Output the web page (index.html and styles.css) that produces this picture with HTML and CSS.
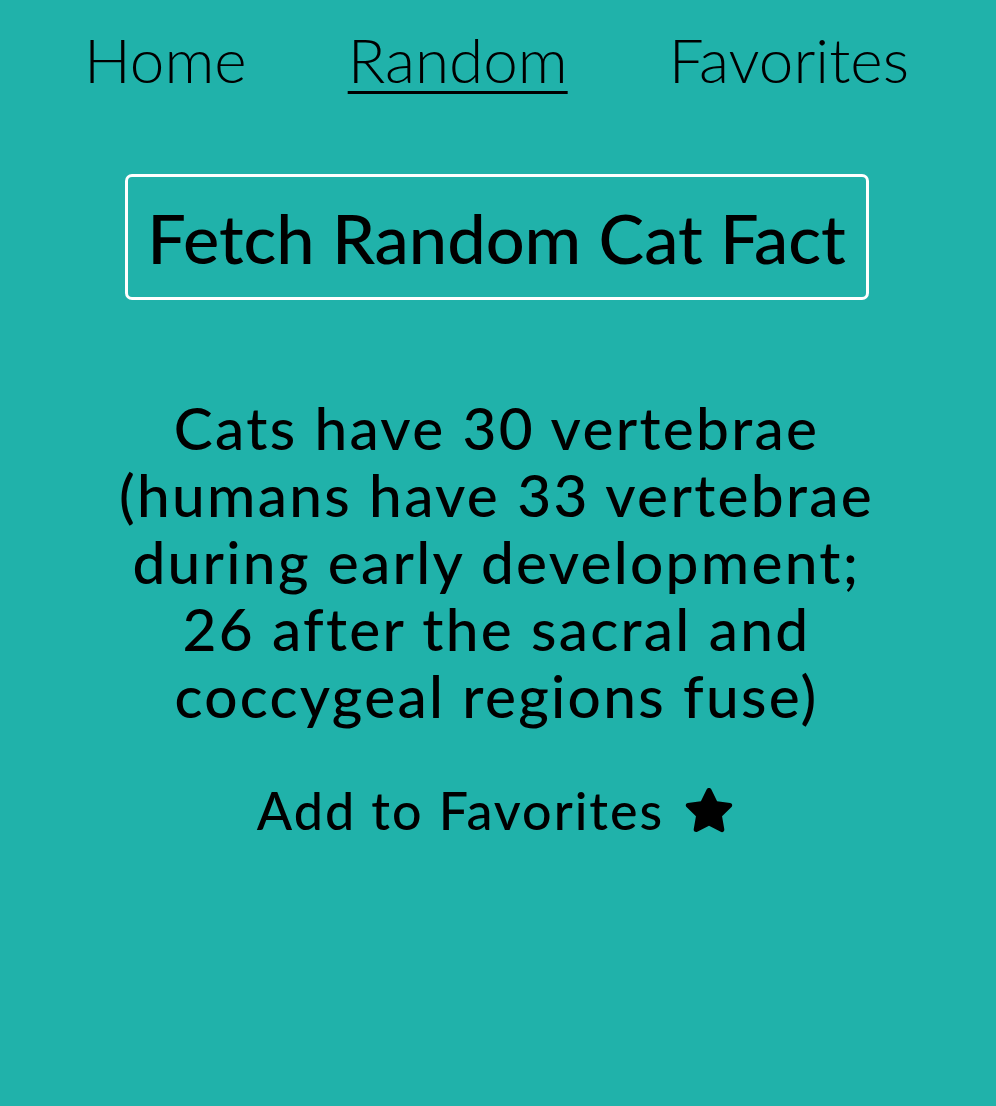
FILE: index.html
```html
<!DOCTYPE html>
<html lang="en">
<head>
<meta charset="utf-8">
<title>Cat Facts</title>
<link rel="stylesheet" href="styles.css">
</head>
<body>
<nav class="nav">
  <a class="nav-link" href="#">Home</a>
  <a class="nav-link active" href="#">Random</a>
  <a class="nav-link" href="#">Favorites</a>
</nav>
<main class="main">
  <button class="fetch-btn" type="button">Fetch Random Cat Fact</button>
  <p class="fact">Cats have 30 vertebrae<br>(humans have 33 vertebrae<br>during early development;<br>26 after the sacral and<br>coccygeal regions fuse)</p>
  <button class="fav-btn" type="button">Add to Favorites
    <svg class="star" viewBox="0 0 24 24" width="54" height="54" aria-hidden="true"><path d="M12 2.2c.4 0 .8.2 1 .6l2.6 5.3 5.8.8c.9.1 1.2 1.2.6 1.8l-4.2 4.1 1 5.8c.2.9-.8 1.600-1.6 1.1L12 19l-5.2 2.7c-.8.4-1.8-.2-1.6-1.1l1-5.8L2 10.7c-.6-.6-.3-1.7.6-1.8l5.8-.8L11 2.8c.2-.4.6-.6 1-.6z"/></svg>
  </button>
</main>
</body>
</html>
```
FILE: styles.css
```css
html, body {
  margin: 0;
  padding: 0;
}
body {
  background: #20b2aa;
  color: #000;
  font-family: "Lato", "Noto Sans", sans-serif;
  min-height: 1106px;
  padding-right: 3px;
}
.nav {
  display: flex;
  justify-content: center;
  gap: 101px;
  padding-top: 21px;
}
.nav-link {
  color: #000;
  text-decoration: none;
  font-size: 62px;
  font-weight: 300;
  line-height: 76px;
}
.nav-link.active {
  text-decoration: underline;
  text-decoration-thickness: 3px;
  text-underline-offset: 8px;
}
.main {
  display: flex;
  flex-direction: column;
  align-items: center;
  padding-top: 77px;
}
.fetch-btn {
  font-family: inherit;
  font-size: 68.5px;
  font-weight: 500;
  color: #000;
  background: transparent;
  border: 3px solid #fff;
  border-radius: 7px;
  width: 744px;
  height: 126px;
  padding: 0;
}
.fact {
  margin: 94px 0 0;
  font-size: 58.5px;
  line-height: 67px;
  letter-spacing: 2.3px;
  text-align: center;
  font-weight: 500;
}
.fav-btn {
  margin-top: 50px;
  display: flex;
  align-items: center;
  gap: 18px;
  font-family: inherit;
  font-size: 52px;
  letter-spacing: 2px;
  font-weight: 500;
  color: #000;
  background: transparent;
  border: 0;
  padding: 0;
}
.star {
  fill: #000;
}
```
